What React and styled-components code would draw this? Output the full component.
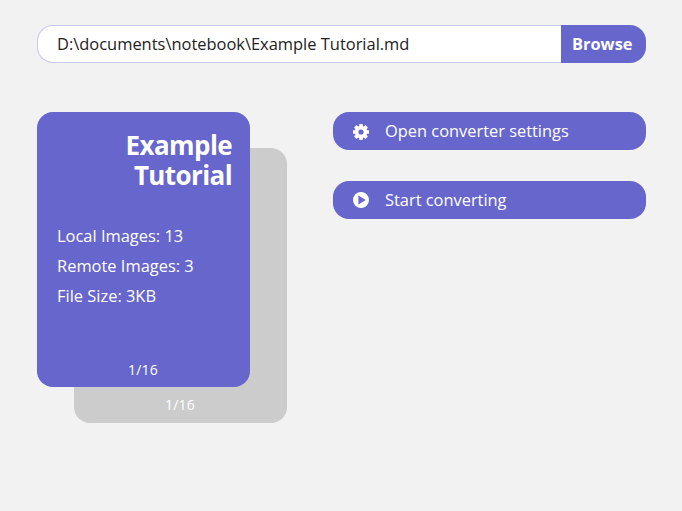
import React from "react";
import styled, { createGlobalStyle } from "styled-components";

const Global = createGlobalStyle`
  * { box-sizing: border-box; }
  body { margin: 0; background: #f2f2f2; font-family: "Open Sans", "Noto Sans", sans-serif; }
`;
const Page = styled.main`
  width: 682px;
  height: 511px;
  padding: 25px 36.5px 0 37px;
`;
const FileBar = styled.header`
  display: flex;
  height: 37.5px;
`;
const Path = styled.div`
  flex: 1;
  padding-left: 19px;
  border: 1px solid #c8c8ea;
  border-right: 0;
  border-radius: 16px 0 0 16px;
  background: #fff;
  line-height: 35px;
  font-size: 16.45px;
  color: #222;
  white-space: nowrap;
`;
const Browse = styled.button`
  width: 84.5px;
  border: 0;
  border-radius: 0 16px 16px 0;
  padding: 0 2px 0 0;
  background: #6666cc;
  color: #fff;
  font: 700 16.4px "Open Sans", sans-serif;
`;
const Content = styled.div`
  display: flex;
  justify-content: space-between;
  margin-top: 49.5px;
`;
const Stack = styled.section`
  display: grid;
  width: 250px;
  height: 311px;
`;
const Card = styled.article`
  grid-area: 1 / 1;
  width: 212.5px;
  height: 275px;
  margin: ${(p) => (p.$back ? "36px 0 0 37px" : "0")};
  padding: 18px 17.5px ${(p) => (p.$back ? "8px" : "7px")} 20px;
  border-radius: 16px;
  display: flex;
  flex-direction: column;
  color: #fff;
  background: ${(p) => (p.$back ? "#cccccc" : "#6666cc")};
`;
const Title = styled.h1`
  width: 120px;
  margin: 0 0 0 auto;
  font-size: 26px;
  line-height: 30px;
  letter-spacing: -0.6px;
  text-align: right;
`;
const Details = styled.div`
  margin-top: 31px;
  font-size: 16.45px;
  line-height: 30px;
`;
const Count = styled.div`
  margin-top: auto;
  padding-right: 3px;
  text-align: center;
  font-size: 14px;
  letter-spacing: 0.2px;
  line-height: 20px;
`;
const Actions = styled.nav`
  display: flex;
  flex-direction: column;
  gap: 31.5px;
  width: 312.5px;
`;
const Action = styled.button`
  display: flex;
  align-items: center;
  gap: 16px;
  height: 37.5px;
  padding: 0 20px;
  border: 0;
  border-radius: 16px;
  background: #6666cc;
  color: #fff;
  font: 16.4px "Open Sans", sans-serif;
`;
const Icon = styled.svg`
  width: 16px;
  height: 16px;
  flex: none;
  margin-top: ${(p) => (p.$raised ? "0" : "2px")};
  fill: #fff;
`;

const teeth = [0, 45, 90, 135, 180, 225, 270, 315];

function GearIcon() {
  return (
    <Icon viewBox="0 0 16 16">
      {teeth.map((a) => (
        <rect key={a} x="6.2" y="0" width="3.6" height="4" rx="0.4" transform={`rotate(${a} 8 8)`} />
      ))}
      <circle cx="8" cy="8" r="4.4" fill="none" stroke="#fff" strokeWidth="3.6" />
    </Icon>
  );
}

function PlayIcon() {
  return (
    <Icon $raised viewBox="0 0 16 16">
      <path fillRule="evenodd" d="M8 0a8 8 0 1 0 0 16A8 8 0 0 0 8 0ZM5.4 3.6v8.8L12.8 8Z" />
    </Icon>
  );
}

export default function App() {
  return (
    <Page>
      <Global />
      <FileBar>
        <Path>D:\documents\notebook\Example Tutorial.md</Path>
        <Browse>Browse</Browse>
      </FileBar>
      <Content>
        <Stack>
          <Card $back>
            <Count>1/16</Count>
          </Card>
          <Card>
            <Title>Example Tutorial</Title>
            <Details>
              <div>Local Images: 13</div>
              <div>Remote Images: 3</div>
              <div>File Size: 3KB</div>
            </Details>
            <Count>1/16</Count>
          </Card>
        </Stack>
        <Actions>
          <Action><GearIcon />Open converter settings</Action>
          <Action><PlayIcon />Start converting</Action>
        </Actions>
      </Content>
    </Page>
  );
}
